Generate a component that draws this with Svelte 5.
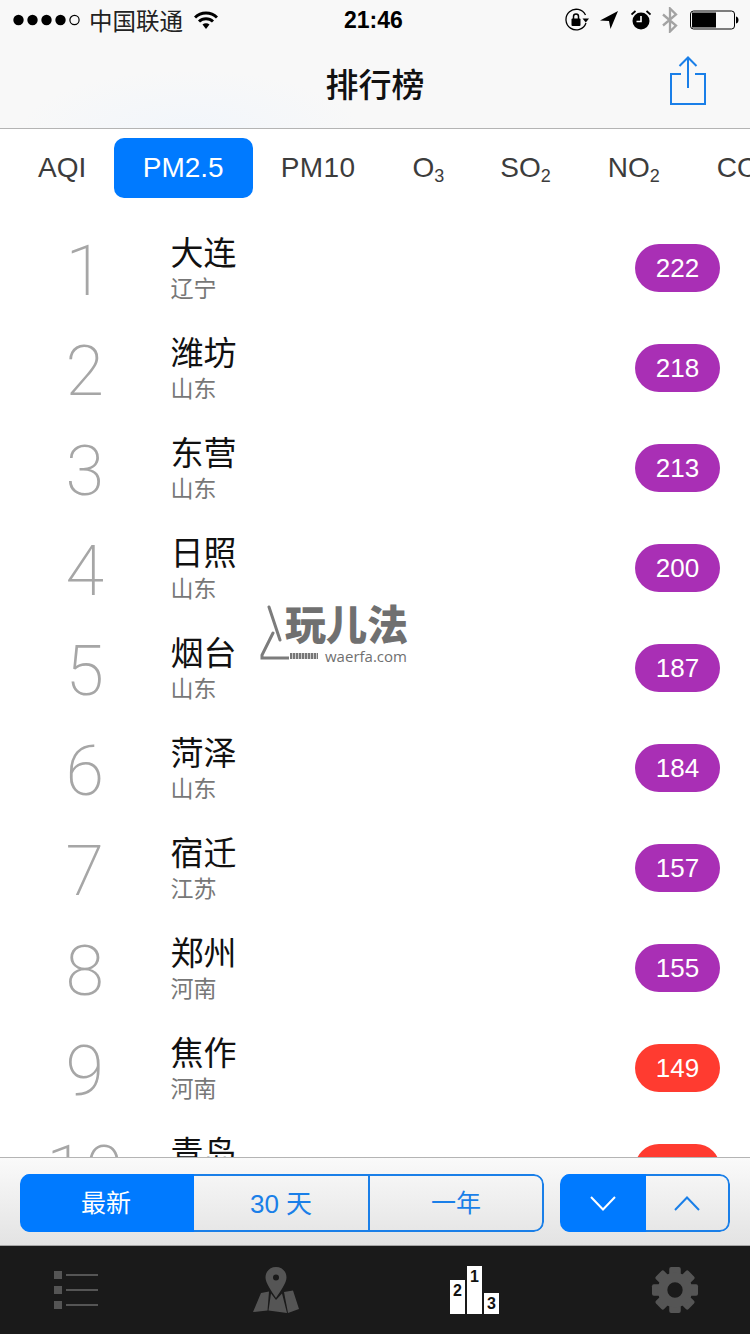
<script>
const tabs = [
	{ label: "AQI" },
	{ label: "PM2.5", active: true },
	{ label: "PM10" },
	{ label: "O", sub: "3" },
	{ label: "SO", sub: "2" },
	{ label: "NO", sub: "2" },
	{ label: "CO" }
];

const rows = [
	{ city: "大连", prov: "辽宁", val: 222 },
	{ city: "潍坊", prov: "山东", val: 218 },
	{ city: "东营", prov: "山东", val: 213 },
	{ city: "日照", prov: "山东", val: 200 },
	{ city: "烟台", prov: "山东", val: 187 },
	{ city: "菏泽", prov: "山东", val: 184 },
	{ city: "宿迁", prov: "江苏", val: 157 },
	{ city: "郑州", prov: "河南", val: 155 },
	{ city: "焦作", prov: "河南", val: 149 },
	{ city: "青岛", prov: "山东", val: 148 }
];

const teeth = [0, 45, 90, 135, 180, 225, 270, 315];
</script>

<div class="page">
	<header class="top">
		<div class="status">
			<svg class="dots" width="68" height="12" viewBox="0 0 68 12">
				<circle cx="5.5" cy="6" r="5.2" fill="#000" />
				<circle cx="19.5" cy="6" r="5.2" fill="#000" />
				<circle cx="33.5" cy="6" r="5.2" fill="#000" />
				<circle cx="47.5" cy="6" r="5.2" fill="#000" />
				<circle cx="61.5" cy="6" r="4.6" fill="none" stroke="#000" stroke-width="1.2" />
			</svg>
			<span class="carrier">中国联通</span>
			<svg class="wifi" width="24" height="20" viewBox="0 0 24 20">
				<path d="M1 7.5C7 1.5 17 1.5 23 7.5" fill="none" stroke="#000" stroke-width="3" />
				<path d="M5 11.5C9 7.7 15 7.7 19 11.5" fill="none" stroke="#000" stroke-width="3" />
				<path d="M8.500 14.500C10.500 12.700 13.500 12.700 15.500 14.500L12 19Z" fill="#000" />
			</svg>
			<span class="time">21:46</span>
			<svg class="lock" width="24" height="24" viewBox="0 0 24 24">
				<path d="M21 15A10.300 10.300 0 1 1 20.500 7" fill="none" stroke="#000" stroke-width="1.300" />
				<path d="M17.500 10.500H24L20.800 14.500Z" fill="#000" />
				<rect x="6.500" y="10.500" width="9" height="7.500" rx="1" fill="#000" />
				<path d="M8.500 11V8.500a2.500 2.500 0 0 1 5 0V11" fill="none" stroke="#000" stroke-width="1.500" />
			</svg>
			<svg class="arrow" width="18" height="18" viewBox="0 0 18 18">
				<path d="M18 0L0 9.500L9 10L10.500 18Z" fill="#000" />
			</svg>
			<svg class="alarm" width="20" height="20" viewBox="0 0 20 20">
				<circle cx="10" cy="11" r="8.500" fill="#000" />
				<path d="M10 6V11.500H5.500" fill="none" stroke="#fff" stroke-width="1.600" />
				<path d="M0.500 4.500L4.500 1M19.500 4.500L15.500 1" stroke="#000" stroke-width="1.800" />
			</svg>
			<svg class="bt" width="16" height="26" viewBox="0 0 16 26">
				<path d="M1 7.500L14 18.500L8 24.500V1.500L14 7.500L1 18.500" fill="none" stroke="#a3a3a3" stroke-width="2.300" />
			</svg>
			<svg class="battery" width="49" height="20" viewBox="0 0 49 20">
				<rect x="0.500" y="1" width="44" height="18" rx="3" fill="none" stroke="#000" stroke-width="1" />
				<rect x="2" y="2.500" width="24" height="15" fill="#000" />
				<path d="M46 6.500C48 7 48.500 8.500 48.500 10S48 13 46 13.500Z" fill="#000" />
			</svg>
		</div>
		<div class="nav">
			<span></span>
			<h1>排行榜</h1>
			<svg class="share" width="38" height="52" viewBox="0 0 38 52">
				<path d="M12 19H2V49H36V19H26" fill="none" stroke="#1a7fe8" stroke-width="2" />
				<path d="M19 3V33M10.500 11L19 2.500L27.500 11" fill="none" stroke="#1a7fe8" stroke-width="2" />
			</svg>
		</div>
	</header>

	<nav class="tabs">
		{#each tabs as t}
			<span class="tab" class:active={t.active}>{t.label}{#if t.sub}<sub>{t.sub}</sub>{/if}</span>
		{/each}
	</nav>

	<main class="list">
		{#each rows as r, i}
			<div class="row">
				<span class="num">{i + 1}</span>
				<div class="names">
					<span class="city">{r.city}</span>
					<span class="prov">{r.prov}</span>
				</div>
				<span class="badge" class:red={r.val < 150}>{r.val}</span>
			</div>
		{/each}
	</main>

	<div class="mark">
		<svg width="30" height="60" viewBox="0 0 30 60">
			<path d="M10 3L21 36M14 29L3 51V54H30" fill="none" stroke="#7c7c7c" stroke-width="3" stroke-linecap="round" />
		</svg>
		<div class="mark-text">
			<span class="mark-big">玩儿法</span>
			<span class="mark-small"><i></i>waerfa.com</span>
		</div>
	</div>

	<div class="toolbar">
		<div class="seg seg-range">
			<span class="on">最新</span>
			<span class="days">30 天</span>
			<span>一年</span>
		</div>
		<div class="seg seg-sort">
			<span class="on">
				<svg width="26" height="15" viewBox="0 0 26 15"><path d="M1 1L13 13.500L25 1" fill="none" stroke="#fff" stroke-width="2" /></svg>
			</span>
			<span>
				<svg width="26" height="15" viewBox="0 0 26 15"><path d="M1 14L13 1.500L25 14" fill="none" stroke="#1a7fe8" stroke-width="2" /></svg>
			</span>
		</div>
	</div>

	<footer class="tabbar">
		<svg class="ic-list" width="44" height="40" viewBox="0 0 44 40">
			<g fill="#555">
				<rect x="0" y="1" width="8" height="8" />
				<rect x="0" y="16" width="8" height="8" />
				<rect x="0" y="31" width="8" height="8" />
				<rect x="12" y="4" width="32" height="2" />
				<rect x="12" y="19" width="32" height="2" />
				<rect x="12" y="34" width="32" height="2" />
			</g>
		</svg>
		<svg class="ic-map" width="46" height="46" viewBox="0 0 46 46">
			<path fill="#555" fill-rule="evenodd" d="M23 0C17 0 12.500 4.500 12.500 10.500C12.500 16 19 25 23 31C27 25 33.500 16 33.500 10.500C33.500 4.500 29 0 23 0ZM23 7.500a3 3 0 1 1 0 6a3 3 0 0 1 0-6Z" />
			<path fill="#555" d="M8 26L16 24.500L14.500 43.500L0 45ZM18 26.500L23 33L29 26.500L34 46L15.500 43.500ZM31 25L40 23.500L46 42L35 46Z" />
		</svg>
		<div class="podium">
			<span class="p2">2</span>
			<span class="p1">1</span>
			<span class="p3">3</span>
		</div>
		<svg class="ic-gear" width="48" height="48" viewBox="0 0 50 50">
			<g fill="#555">
				{#each teeth as a}
					<rect x="19" y="1" width="12" height="12" rx="2" transform="rotate({a} 25 25)" />
				{/each}
			</g>
			<circle cx="25" cy="25" r="13" fill="none" stroke="#555" stroke-width="10" />
		</svg>
	</footer>
</div>

<style>
:global(body) {
	margin: 0;
}

.page {
	position: relative;
	width: 750px;
	height: 1334px;
	display: flex;
	flex-direction: column;
	overflow: hidden;
	background: #fff;
	font-family: "Liberation Sans", "Noto Sans CJK SC", sans-serif;
}

.top {
	height: 128px;
	flex: none;
	background: radial-gradient(ellipse 170px 60px at 190px 130px, #f2f6fb, #f8f8f8);
	border-bottom: 1px solid #b4b4b4;
}

.status {
	height: 40px;
	display: flex;
	align-items: center;
	padding-left: 13px;
}

.carrier {
	margin-left: 8px;
	font-size: 23.5px;
	color: #222;
}

.wifi {
	margin-left: 11px;
}

.time {
	margin-left: 126px;
	width: 60px;
	font-size: 23px;
	font-weight: bold;
	color: #000;
}

.lock {
	margin-left: 161px;
}

.arrow {
	margin-left: 11px;
}

.alarm {
	margin-left: 13px;
}

.bt {
	margin-left: 11px;
}

.battery {
	margin-left: 12px;
}

.nav {
	height: 88px;
	display: grid;
	grid-template-columns: 1fr auto 1fr;
	align-items: center;
}

h1 {
	margin: 2px 0 0;
	font-size: 33px;
	font-weight: 500;
	color: #111;
	line-height: 1;
}

.share {
	justify-self: end;
	margin-right: 43px;
	margin-top: -6px;
}

.tabs {
	flex: none;
	height: 60px;
	margin-top: 9px;
	padding-left: 10px;
	display: flex;
	white-space: nowrap;
}

.tab {
	flex: none;
	padding: 0 28px;
	line-height: 60px;
	font-size: 28px;
	color: #3c3c3c;
}

.tab.active {
	padding: 0 29px 0 28.5px;
	background: #007aff;
	color: #fff;
	border-radius: 10px;
}

.tab:nth-child(3) {
	letter-spacing: 0.4px;
}

.tab:nth-child(4) {
	padding-left: 29px;
}

.tab:nth-child(6) {
	padding-left: 29px;
}

.tab:nth-child(7) {
	padding-left: 29px;
}

sub {
	font-size: 18px;
	line-height: 0;
	vertical-align: -5px;
}

.list {
	flex: 1;
	min-height: 0;
	overflow: hidden;
	padding-top: 20px;
}

.row {
	height: 100px;
	display: flex;
	align-items: center;
	padding-right: 30px;
}

.num {
	width: 170.5px;
	padding: 6px 1px 0 0;
	box-sizing: border-box;
	text-align: center;
	font-family: Roboto, "Liberation Sans", sans-serif;
	font-weight: 200;
	font-size: 70px;
	line-height: 1;
	color: #a6a6a6;
}

.names {
	flex: 1;
	display: flex;
	flex-direction: column;
	padding-top: 3px;
}

.city {
	font-size: 33px;
	line-height: 38px;
	color: #111;
}

.prov {
	margin-top: 1px;
	font-size: 23px;
	line-height: 30px;
	color: #777;
}

.badge {
	width: 85px;
	height: 48px;
	border-radius: 24px;
	background: #a92fb5;
	color: #fff;
	font-size: 26px;
	line-height: 48px;
	text-align: center;
}

.badge.red {
	background: #ff3b30;
}

.mark {
	position: absolute;
	left: 259px;
	top: 604px;
	display: flex;
	color: #707070;
}

.mark-text {
	display: flex;
	flex-direction: column;
	margin-left: -4px;
}

.mark-big {
	font-size: 41px;
	font-weight: 900;
	line-height: 45px;
}

.mark-small {
	display: flex;
	align-items: center;
	padding-left: 5px;
	font-family: "Open Sans", sans-serif;
	font-size: 15px;
	line-height: 14px;
}

.mark-small i {
	width: 28px;
	height: 6px;
	margin-right: 7px;
	background: repeating-linear-gradient(90deg, #777 0 2px, #ccc 2px 3px);
}

.toolbar {
	flex: none;
	height: 89px;
	box-sizing: border-box;
	border-top: 1px solid #b4b4b4;
	border-bottom: 1px solid #a5a5a5;
	background: linear-gradient(#fafafa, #e3e3e3);
	padding: 16px 20px 0;
	display: flex;
	gap: 16px;
}

.seg {
	height: 58px;
	display: flex;
	border-radius: 10px;
	overflow: hidden;
}

.seg span {
	display: flex;
	align-items: center;
	justify-content: center;
	box-sizing: border-box;
	border: solid #1a7fe8;
	border-width: 2px 0;
	color: #1a7fe8;
}

.seg .on {
	background: #007aff;
	border-color: #007aff;
	color: #fff;
}

.seg span:last-child {
	border-width: 2px;
	border-radius: 0 10px 10px 0;
}

.seg-range span {
	font-size: 25px;
	padding-bottom: 5px;
}

.seg-range span:first-child {
	width: 174px;
	padding-right: 2px;
}

.seg-range .days {
	width: 174px;
	font-size: 26px;
	padding-bottom: 4px;
}

.seg-range span:last-child {
	width: 176px;
}

.seg-sort span:first-child {
	width: 86px;
}

.seg-sort span:last-child {
	width: 84px;
	border-left-width: 0;
}

.tabbar {
	flex: none;
	height: 88px;
	box-sizing: border-box;
	background: #1a1a1a;
	display: flex;
	align-items: center;
	padding-left: 54px;
}

.ic-map {
	margin-left: 155px;
}

.podium {
	margin-left: 151px;
	display: flex;
	align-items: flex-end;
	gap: 2px;
	font-size: 16px;
	font-weight: bold;
	color: #111;
	text-align: center;
}

.ic-gear {
	margin-left: 152px;
}

.podium span {
	background: #fff;
	width: 15px;
	line-height: 22px;
}

.p1 {
	height: 48px;
}

.p2 {
	height: 34px;
}

.p3 {
	height: 21px;
}
</style>
